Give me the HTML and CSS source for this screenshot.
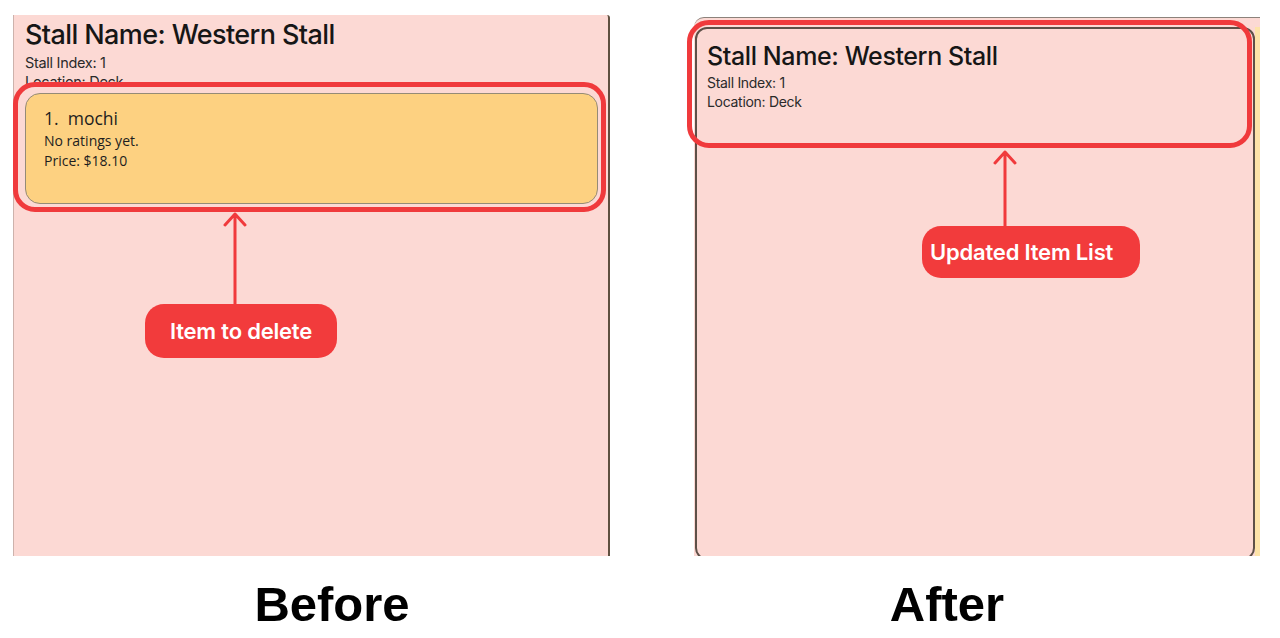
FILE: index.html
```html
<!DOCTYPE html>
<html lang="en">
<head>
<meta charset="utf-8">
<title>Delete item: before and after</title>
<link rel="stylesheet" href="styles.css">
</head>
<body>
<main class="page">
  <section class="col col-before">
    <div class="shot shot-before">
      <div class="stall-info">
        <h1 class="stall-name">Stall Name: Western Stall</h1>
        <div class="stall-meta">Stall Index: 1</div>
        <div class="stall-meta">Location: Deck</div>
      </div>
      <div class="item-card">
        <div class="item-name">1.&nbsp; mochi</div>
        <div class="item-line">No ratings yet.</div>
        <div class="item-line">Price: $18.10</div>
      </div>
      <div class="highlight highlight-before"></div>
      <svg class="arrow arrow-before" width="24" height="92" viewBox="0 0 24 92"><path d="M12 2 V92 M2 13 L12 2 L22 13" fill="none" stroke="#f03a3c" stroke-width="3" stroke-linecap="round" stroke-linejoin="round"/></svg>
      <div class="pill pill-before">Item to delete</div>
    </div>
    <div class="label label-before">Before</div>
  </section>

  <section class="col col-after">
    <div class="shot shot-after">
      <div class="after-body">
        <div class="stall-card">
          <h1 class="stall-name stall-name-after">Stall Name: Western Stall</h1>
          <div class="stall-meta stall-meta-after">Stall Index: 1</div>
          <div class="stall-meta stall-meta-after">Location: Deck</div>
        </div>
        <div class="side-strip"></div>
      </div>
      <div class="highlight highlight-after"></div>
      <svg class="arrow arrow-after" width="24" height="76" viewBox="0 0 24 76"><path d="M12 2 V76 M2 13 L12 2 L22 13" fill="none" stroke="#f03a3c" stroke-width="3" stroke-linecap="round" stroke-linejoin="round"/></svg>
      <div class="pill pill-after">Updated Item List</div>
    </div>
    <div class="label label-after">After</div>
  </section>
</main>
</body>
</html>
```

FILE: styles.css
```css
* {
  box-sizing: border-box;
}

html, body {
  margin: 0;
  padding: 0;
  background: #ffffff;
}

body {
  width: 1280px;
  height: 638px;
  overflow: hidden;
  font-family: Inter, "Liberation Sans", sans-serif;
  color: #1b1b1b;
}

.page {
  display: flex;
  width: 1280px;
}

.col {
  width: 640px;
  display: flex;
  flex-direction: column;
}

/* ---------- screenshot panels ---------- */
.shot {
  position: relative;
  background: #fcd9d4;
}

.shot-before {
  margin: 15px 0 0 13px;
  width: 597px;
  height: 541px;
  border-right: 2px solid #5f5040;
  border-top-right-radius: 3px;
  box-shadow: inset 1px 0 0 #cdb2ac;
}

.stall-info {
  height: 72px;
  padding: 4px 0 0 12px;
  overflow: hidden;
}

.stall-name {
  margin: 0;
  font-family: Inter, "Liberation Sans", sans-serif;
  font-weight: 500;
  font-size: 27px;
  line-height: 32px;
  letter-spacing: -0.6px;
  color: #161616;
  white-space: nowrap;
}

.stall-meta {
  font-family: Inter, "Liberation Sans", sans-serif;
  font-size: 14.5px;
  line-height: 19px;
  letter-spacing: -0.3px;
  color: #2a2a2a;
}

.stall-name + .stall-meta {
  margin-top: 2px;
}

.item-card {
  margin: 6px 10px 0 12px;
  height: 111px;
  background: #fdd181;
  border: 1px solid #958b76;
  border-radius: 15px;
  padding: 12px 0 0 18px;
  font-family: "Open Sans", "Noto Sans", sans-serif;
  color: #1e1e1e;
}

.item-name {
  font-size: 17.5px;
  line-height: 25px;
}

.item-line {
  font-size: 14px;
  line-height: 20px;
}

/* ---------- after panel ---------- */
.shot-after {
  margin: 17px 0 0 54px;
  width: 566px;
  height: 539px;
  border-top: 1px solid #8c827b;
  border-top-left-radius: 10px;
  padding-top: 9px;
  display: flex;
  flex-direction: column;
}

.after-body {
  flex: 1;
  display: flex;
  overflow: hidden;
}

.stall-card {
  flex: 1;
  height: 533px;
  margin-left: 1px;
  background: #fcd9d4;
  border: 2px solid #5e5048;
  border-radius: 12px;
  padding: 12px 0 0 10px;
}

.side-strip {
  width: 5px;
  background: #fde3a9;
}

.stall-name-after {
  font-size: 25px;
  line-height: 30px;
  letter-spacing: -0.4px;
}

.stall-meta-after {
  font-size: 14px;
  letter-spacing: -0.3px;
}

/* ---------- annotations ---------- */
.highlight {
  position: absolute;
  border: 5px solid #f03a3c;
  border-radius: 22px;
}

.highlight-before {
  left: 0;
  top: 67px;
  width: 593px;
  height: 130px;
}

.highlight-after {
  left: -7px;
  top: 2px;
  width: 565px;
  height: 128px;
}

.arrow {
  position: absolute;
  display: block;
}

.arrow-before {
  left: 210px;
  top: 197px;
}

.arrow-after {
  left: 299px;
  top: 132px;
}

.pill {
  position: absolute;
  display: flex;
  align-items: center;
  background: #f23b3c;
  color: #ffffff;
  border-radius: 19px;
  font-family: Inter, "Liberation Sans", sans-serif;
  font-weight: 600;
  font-size: 22px;
  letter-spacing: -0.2px;
  white-space: nowrap;
}

.pill-before {
  left: 132px;
  top: 289px;
  width: 192px;
  height: 54px;
  justify-content: center;
}

.pill-after {
  left: 228px;
  top: 208px;
  width: 218px;
  height: 52px;
  padding-left: 8px;
}

/* ---------- labels ---------- */
.label {
  margin-top: 24px;
  font-family: "Liberation Sans", Arial, sans-serif;
  font-weight: 700;
  font-size: 49px;
  line-height: 49px;
  color: #000000;
  text-align: center;
}

.label-before {
  padding-left: 24px;
}

.label-after {
  padding-right: 26px;
}
```
